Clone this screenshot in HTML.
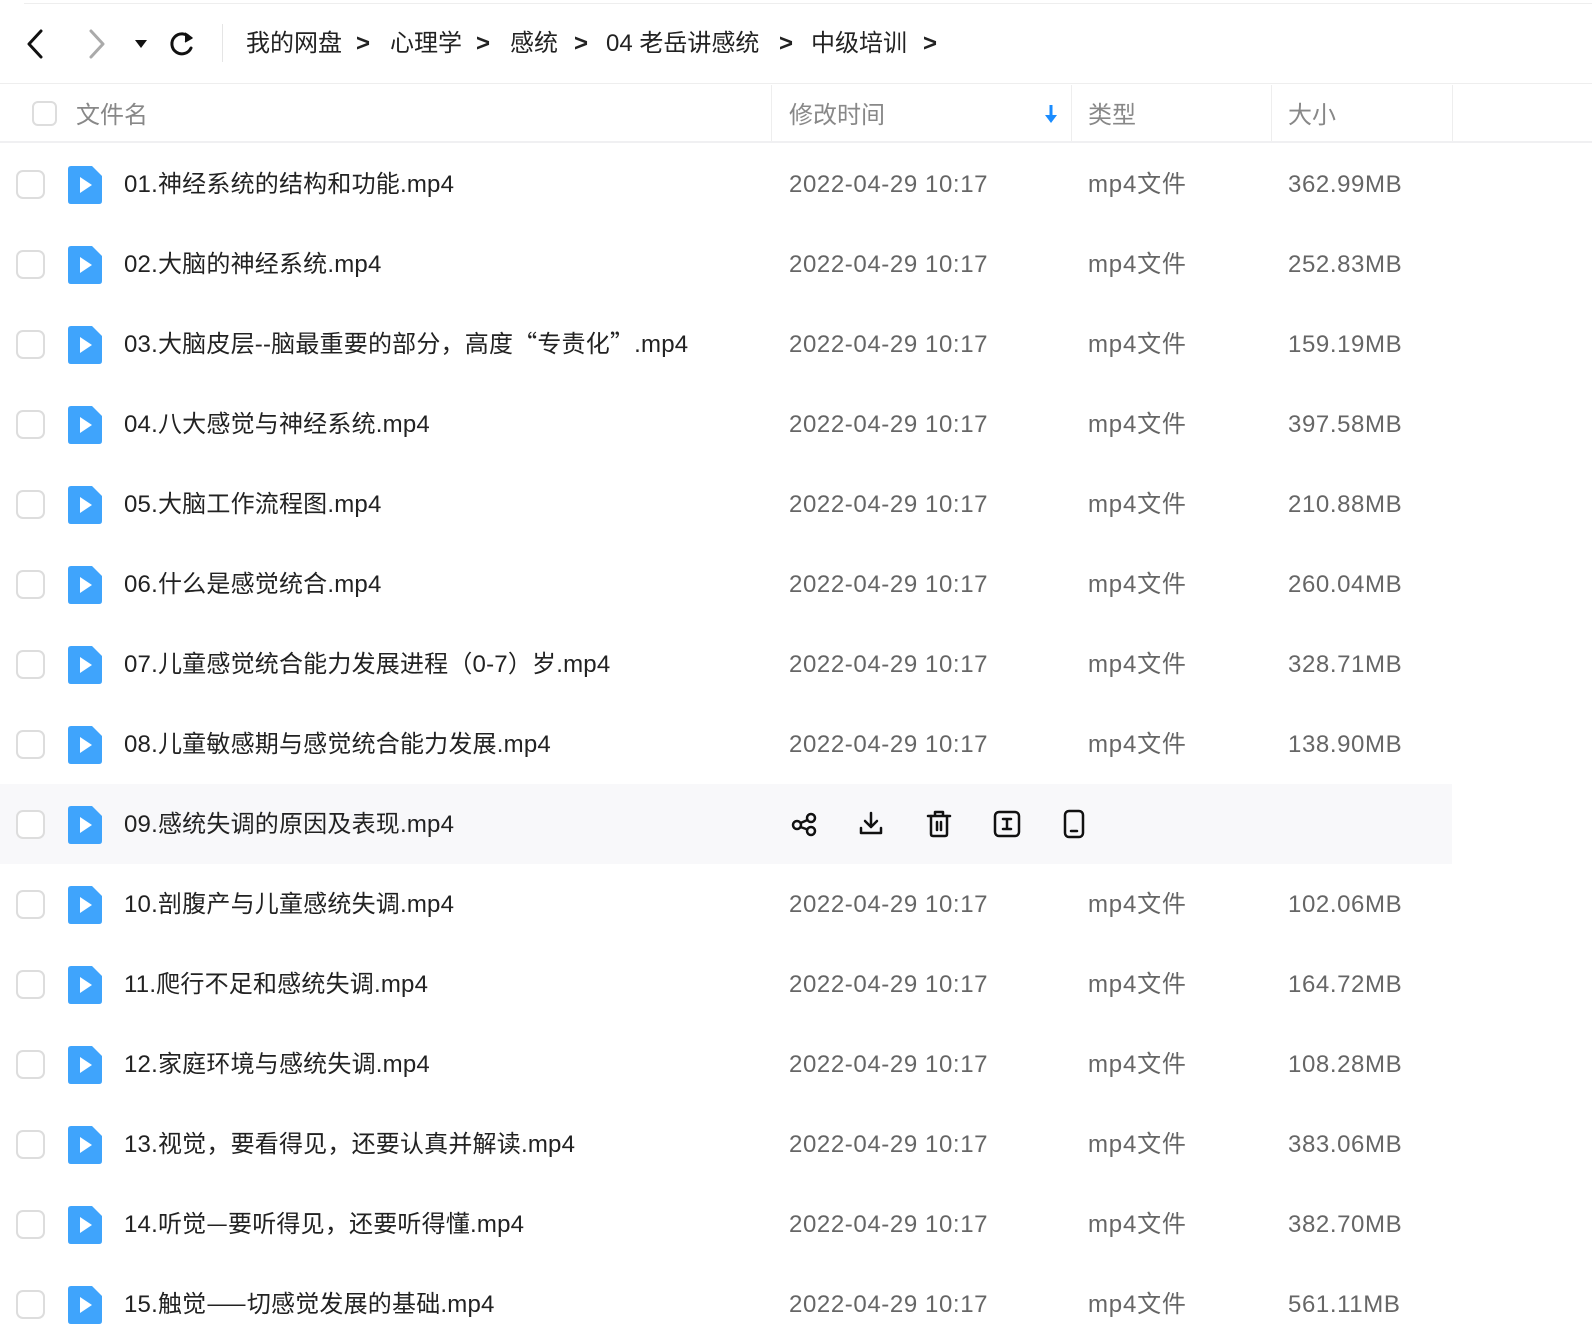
<!DOCTYPE html>
<html><head><meta charset="utf-8"><style>
*{margin:0;padding:0;box-sizing:border-box}
body{width:1592px;height:1340px;background:#fff;font-family:"Liberation Sans","Noto Sans CJK SC",sans-serif;position:relative;overflow:hidden}
.abs{position:absolute}
.topline{left:24px;top:3px;width:1568px;height:1px;background:#eee}
.bc{top:27px;font-size:24px;color:#222;line-height:34px;white-space:nowrap}
.hdr{left:0;top:83px;width:1592px;height:60px;border-top:1px solid #eee;border-bottom:2px solid #f0f0f2}
.ht{font-size:24px;color:#888;top:100px;line-height:32px}
.div{top:85px;width:1px;height:56px;background:#eee}
.cb{width:29px;height:29px;border:2px solid #ddd;border-radius:7px;background:#fff}
.row{position:absolute;left:0;width:1592px;height:80px}
.row .cb{position:absolute;left:16px;top:26px}
.row svg.ic{position:absolute;left:68px;top:22px}
.t{position:absolute;top:23px;font-size:24px;line-height:36px;white-space:nowrap}
.n{left:124px;color:#222;letter-spacing:0.2px}
.d{left:789px;color:#666;letter-spacing:0.6px}
.y{left:1088px;color:#666;letter-spacing:0.8px}
.s{left:1288px;color:#666;letter-spacing:0.6px}
.q{font-family:"Noto Sans CJK SC",sans-serif;line-height:0}
.hover{background:#f8f8fa;width:1452px}
</style></head><body>
<div class="abs topline"></div>
<svg class="abs" style="left:24px;top:28px" width="22" height="32" viewBox="0 0 22 32"><path d="M17 3 L5 16 L17 29" fill="none" stroke="#111" stroke-width="3" stroke-linecap="round" stroke-linejoin="round"/></svg>
<svg class="abs" style="left:86px;top:28px" width="22" height="32" viewBox="0 0 22 32"><path d="M5 3 L17 16 L5 29" fill="none" stroke="#aaa" stroke-width="3" stroke-linecap="round" stroke-linejoin="round"/></svg>
<svg class="abs" style="left:134px;top:38px" width="14" height="12" viewBox="0 0 14 12"><path d="M1 2 H13 L7 10 Z" fill="#111"/></svg>
<svg class="abs" style="left:168px;top:30px" width="28" height="28" viewBox="0 0 28 28"><path d="M22 8 A10 10 0 1 0 23 18" fill="none" stroke="#111" stroke-width="3" stroke-linecap="round"/><path d="M17 3 L24 8 L17 12" fill="#111" stroke="#111" stroke-width="1.5" stroke-linejoin="round"/></svg>
<div class="abs" style="left:222px;top:24px;width:1px;height:38px;background:#e5e5e5"></div>
<div class="abs bc" style="left:246px">我的网盘</div>
<div class="abs bc" style="left:356px;font-weight:bold">&gt;</div>
<div class="abs bc" style="left:390px">心理学</div>
<div class="abs bc" style="left:476px;font-weight:bold">&gt;</div>
<div class="abs bc" style="left:510px">感统</div>
<div class="abs bc" style="left:574px;font-weight:bold">&gt;</div>
<div class="abs bc" style="left:606px">04 老岳讲感统</div>
<div class="abs bc" style="left:779px;font-weight:bold">&gt;</div>
<div class="abs bc" style="left:811px">中级培训</div>
<div class="abs bc" style="left:923px;font-weight:bold">&gt;</div>

<div class="abs hdr"></div>
<div class="abs cb" style="left:32px;top:101px;width:25px;height:25px;border-radius:6px"></div>
<div class="abs ht" style="left:76px">文件名</div>
<div class="abs div" style="left:771px"></div>
<div class="abs ht" style="left:789px">修改时间</div>
<svg class="abs" style="left:1044px;top:104px" width="14" height="20" viewBox="0 0 14 20"><path d="M7 1 V14" stroke="#1a8cff" stroke-width="3"/><path d="M1 11 H13 L7 19 Z" fill="#1a8cff"/></svg>
<div class="abs div" style="left:1071px"></div>
<div class="abs ht" style="left:1088px">类型</div>
<div class="abs div" style="left:1271px"></div>
<div class="abs ht" style="left:1288px">大小</div>
<div class="abs div" style="left:1452px"></div>

<div class="row" style="top:144px"><div class="cb"></div><svg class="ic" width="34" height="38" viewBox="0 0 34 38"><path d="M3 0H24L34 10V35Q34 38 31 38H3Q0 38 0 35V3Q0 0 3 0Z" fill="#3fa4fc"/><path d="M12 11L24 19L12 27Z" fill="#fff"/></svg><div class="t n">01.神经系统的结构和功能.mp4</div><div class="t d">2022-04-29 10:17</div><div class="t y">mp4文件</div><div class="t s">362.99MB</div></div>
<div class="row" style="top:224px"><div class="cb"></div><svg class="ic" width="34" height="38" viewBox="0 0 34 38"><path d="M3 0H24L34 10V35Q34 38 31 38H3Q0 38 0 35V3Q0 0 3 0Z" fill="#3fa4fc"/><path d="M12 11L24 19L12 27Z" fill="#fff"/></svg><div class="t n">02.大脑的神经系统.mp4</div><div class="t d">2022-04-29 10:17</div><div class="t y">mp4文件</div><div class="t s">252.83MB</div></div>
<div class="row" style="top:304px"><div class="cb"></div><svg class="ic" width="34" height="38" viewBox="0 0 34 38"><path d="M3 0H24L34 10V35Q34 38 31 38H3Q0 38 0 35V3Q0 0 3 0Z" fill="#3fa4fc"/><path d="M12 11L24 19L12 27Z" fill="#fff"/></svg><div class="t n">03.大脑皮层--脑最重要的部分，高度<span class="q">“</span>专责化<span class="q">”</span>.mp4</div><div class="t d">2022-04-29 10:17</div><div class="t y">mp4文件</div><div class="t s">159.19MB</div></div>
<div class="row" style="top:384px"><div class="cb"></div><svg class="ic" width="34" height="38" viewBox="0 0 34 38"><path d="M3 0H24L34 10V35Q34 38 31 38H3Q0 38 0 35V3Q0 0 3 0Z" fill="#3fa4fc"/><path d="M12 11L24 19L12 27Z" fill="#fff"/></svg><div class="t n">04.八大感觉与神经系统.mp4</div><div class="t d">2022-04-29 10:17</div><div class="t y">mp4文件</div><div class="t s">397.58MB</div></div>
<div class="row" style="top:464px"><div class="cb"></div><svg class="ic" width="34" height="38" viewBox="0 0 34 38"><path d="M3 0H24L34 10V35Q34 38 31 38H3Q0 38 0 35V3Q0 0 3 0Z" fill="#3fa4fc"/><path d="M12 11L24 19L12 27Z" fill="#fff"/></svg><div class="t n">05.大脑工作流程图.mp4</div><div class="t d">2022-04-29 10:17</div><div class="t y">mp4文件</div><div class="t s">210.88MB</div></div>
<div class="row" style="top:544px"><div class="cb"></div><svg class="ic" width="34" height="38" viewBox="0 0 34 38"><path d="M3 0H24L34 10V35Q34 38 31 38H3Q0 38 0 35V3Q0 0 3 0Z" fill="#3fa4fc"/><path d="M12 11L24 19L12 27Z" fill="#fff"/></svg><div class="t n">06.什么是感觉统合.mp4</div><div class="t d">2022-04-29 10:17</div><div class="t y">mp4文件</div><div class="t s">260.04MB</div></div>
<div class="row" style="top:624px"><div class="cb"></div><svg class="ic" width="34" height="38" viewBox="0 0 34 38"><path d="M3 0H24L34 10V35Q34 38 31 38H3Q0 38 0 35V3Q0 0 3 0Z" fill="#3fa4fc"/><path d="M12 11L24 19L12 27Z" fill="#fff"/></svg><div class="t n">07.儿童感觉统合能力发展进程（0-7）岁.mp4</div><div class="t d">2022-04-29 10:17</div><div class="t y">mp4文件</div><div class="t s">328.71MB</div></div>
<div class="row" style="top:704px"><div class="cb"></div><svg class="ic" width="34" height="38" viewBox="0 0 34 38"><path d="M3 0H24L34 10V35Q34 38 31 38H3Q0 38 0 35V3Q0 0 3 0Z" fill="#3fa4fc"/><path d="M12 11L24 19L12 27Z" fill="#fff"/></svg><div class="t n">08.儿童敏感期与感觉统合能力发展.mp4</div><div class="t d">2022-04-29 10:17</div><div class="t y">mp4文件</div><div class="t s">138.90MB</div></div>
<div class="row hover" style="top:784px"><div class="cb"></div><svg class="ic" width="34" height="38" viewBox="0 0 34 38"><path d="M3 0H24L34 10V35Q34 38 31 38H3Q0 38 0 35V3Q0 0 3 0Z" fill="#3fa4fc"/><path d="M12 11L24 19L12 27Z" fill="#fff"/></svg><div class="t n">09.感统失调的原因及表现.mp4</div>
<svg style="position:absolute;left:790px;top:26px" width="28" height="28" viewBox="0 0 28 28" fill="none" stroke="#111" stroke-width="2.5"><circle cx="7" cy="15" r="4"/><circle cx="21" cy="8" r="4"/><circle cx="21" cy="21" r="4"/><path d="M10.5 13 L17.5 10 M10.5 17 L17.5 19.5"/></svg>
<svg style="position:absolute;left:857px;top:26px" width="28" height="28" viewBox="0 0 28 28" fill="none" stroke="#111" stroke-width="2.5" stroke-linecap="round" stroke-linejoin="round"><path d="M14 3 V17 M8 11 L14 17 L20 11"/><path d="M4 18 V23 H24 V18"/></svg>
<svg style="position:absolute;left:925px;top:25px" width="28" height="30" viewBox="0 0 28 30" fill="none" stroke="#111" stroke-width="2.5" stroke-linecap="round" stroke-linejoin="round"><path d="M3 7 H25 M10 7 V3 H18 V7"/><path d="M6 7 V25 Q6 27 8 27 H20 Q22 27 22 25 V7"/><path d="M12 13 V21 M16 13 V21"/></svg>
<svg style="position:absolute;left:993px;top:26px" width="28" height="28" viewBox="0 0 28 28" fill="none" stroke="#111" stroke-width="2.5" stroke-linecap="round"><rect x="2" y="2" width="24" height="24" rx="4"/><path d="M10 9 H18 M14 9 V19 M10 19 H18"/></svg>
<svg style="position:absolute;left:1062px;top:25px" width="24" height="30" viewBox="0 0 24 30" fill="none" stroke="#111" stroke-width="2.5" stroke-linecap="round"><rect x="3" y="2" width="18" height="26" rx="4"/><path d="M9 22 H15"/></svg>
</div>
<div class="row" style="top:864px"><div class="cb"></div><svg class="ic" width="34" height="38" viewBox="0 0 34 38"><path d="M3 0H24L34 10V35Q34 38 31 38H3Q0 38 0 35V3Q0 0 3 0Z" fill="#3fa4fc"/><path d="M12 11L24 19L12 27Z" fill="#fff"/></svg><div class="t n">10.剖腹产与儿童感统失调.mp4</div><div class="t d">2022-04-29 10:17</div><div class="t y">mp4文件</div><div class="t s">102.06MB</div></div>
<div class="row" style="top:944px"><div class="cb"></div><svg class="ic" width="34" height="38" viewBox="0 0 34 38"><path d="M3 0H24L34 10V35Q34 38 31 38H3Q0 38 0 35V3Q0 0 3 0Z" fill="#3fa4fc"/><path d="M12 11L24 19L12 27Z" fill="#fff"/></svg><div class="t n">11.爬行不足和感统失调.mp4</div><div class="t d">2022-04-29 10:17</div><div class="t y">mp4文件</div><div class="t s">164.72MB</div></div>
<div class="row" style="top:1024px"><div class="cb"></div><svg class="ic" width="34" height="38" viewBox="0 0 34 38"><path d="M3 0H24L34 10V35Q34 38 31 38H3Q0 38 0 35V3Q0 0 3 0Z" fill="#3fa4fc"/><path d="M12 11L24 19L12 27Z" fill="#fff"/></svg><div class="t n">12.家庭环境与感统失调.mp4</div><div class="t d">2022-04-29 10:17</div><div class="t y">mp4文件</div><div class="t s">108.28MB</div></div>
<div class="row" style="top:1104px"><div class="cb"></div><svg class="ic" width="34" height="38" viewBox="0 0 34 38"><path d="M3 0H24L34 10V35Q34 38 31 38H3Q0 38 0 35V3Q0 0 3 0Z" fill="#3fa4fc"/><path d="M12 11L24 19L12 27Z" fill="#fff"/></svg><div class="t n">13.视觉，要看得见，还要认真并解读.mp4</div><div class="t d">2022-04-29 10:17</div><div class="t y">mp4文件</div><div class="t s">383.06MB</div></div>
<div class="row" style="top:1184px"><div class="cb"></div><svg class="ic" width="34" height="38" viewBox="0 0 34 38"><path d="M3 0H24L34 10V35Q34 38 31 38H3Q0 38 0 35V3Q0 0 3 0Z" fill="#3fa4fc"/><path d="M12 11L24 19L12 27Z" fill="#fff"/></svg><div class="t n">14.听觉<span class="q">—</span>要听得见，还要听得懂.mp4</div><div class="t d">2022-04-29 10:17</div><div class="t y">mp4文件</div><div class="t s">382.70MB</div></div>
<div class="row" style="top:1264px"><div class="cb"></div><svg class="ic" width="34" height="38" viewBox="0 0 34 38"><path d="M3 0H24L34 10V35Q34 38 31 38H3Q0 38 0 35V3Q0 0 3 0Z" fill="#3fa4fc"/><path d="M12 11L24 19L12 27Z" fill="#fff"/></svg><div class="t n">15.触觉<span class="q">——</span>切感觉发展的基础.mp4</div><div class="t d">2022-04-29 10:17</div><div class="t y">mp4文件</div><div class="t s">561.11MB</div></div>
</body></html>
